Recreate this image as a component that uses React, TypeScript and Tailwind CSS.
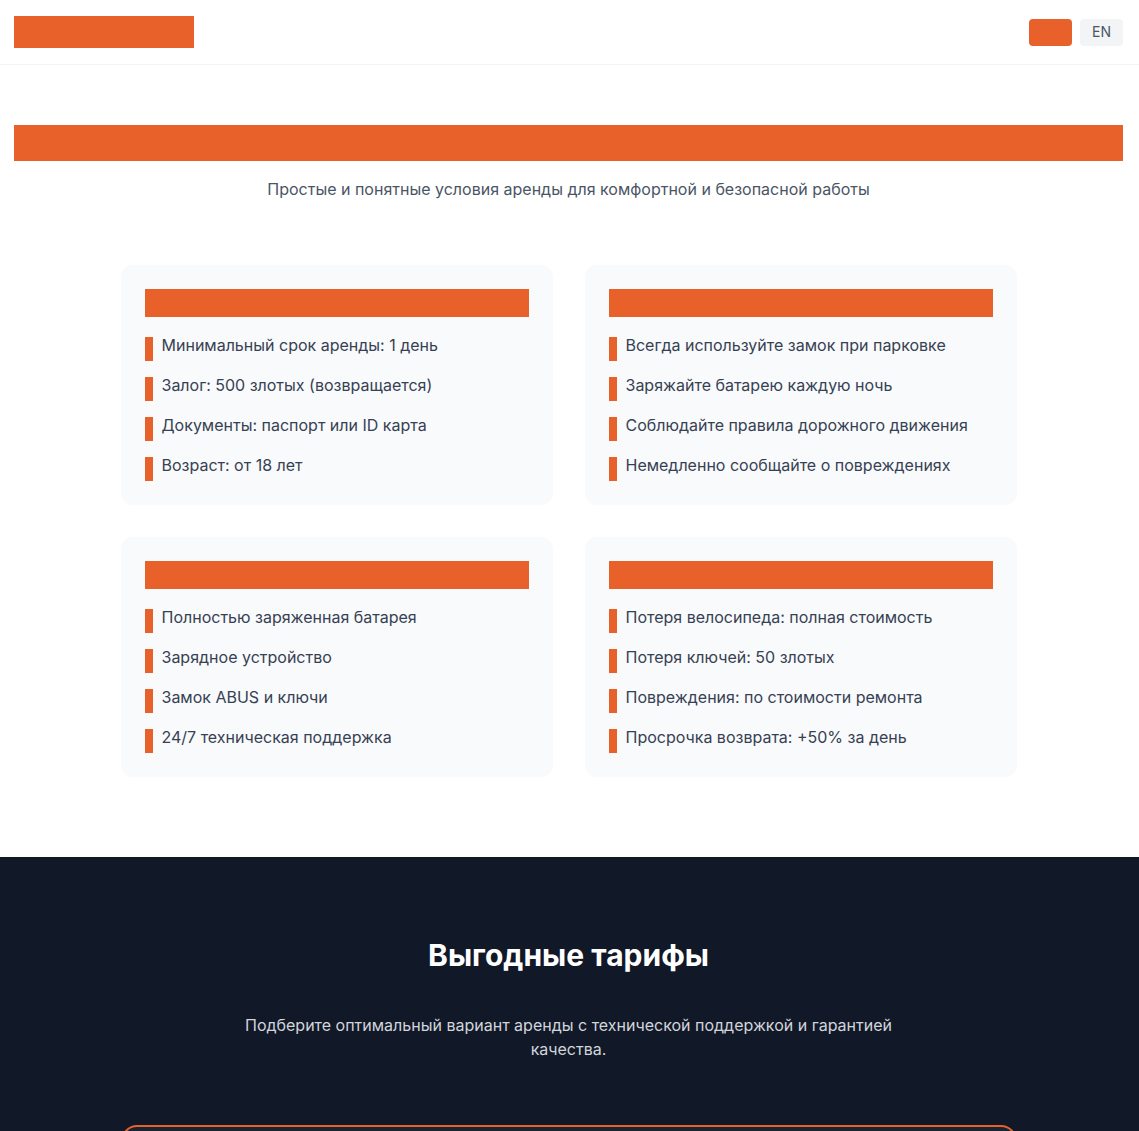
const ORANGE = "bg-[#e8612a]"

const conditions = [
  [
    "Минимальный срок аренды: 1 день",
    "Залог: 500 злотых (возвращается)",
    "Документы: паспорт или ID карта",
    "Возраст: от 18 лет",
  ],
  [
    "Всегда используйте замок при парковке",
    "Заряжайте батарею каждую ночь",
    "Соблюдайте правила дорожного движения",
    "Немедленно сообщайте о повреждениях",
  ],
  [
    "Полностью заряженная батарея",
    "Зарядное устройство",
    "Замок ABUS и ключи",
    "24/7 техническая поддержка",
  ],
  [
    "Потеря велосипеда: полная стоимость",
    "Потеря ключей: 50 злотых",
    "Повреждения: по стоимости ремонта",
    "Просрочка возврата: +50% за день",
  ],
]

function Header() {
  return (
    <header className="bg-white border-b border-gray-100 h-[65px]">
      <div className="flex items-center justify-between h-16 pl-[14px] pr-4">
        {/* Logo placeholder */}
        <div className={`${ORANGE} w-[180px] h-8`} />
        <div className="flex items-center gap-2">
          <button className={`${ORANGE} w-[43px] h-[27px] rounded`} />
          <button className="bg-gray-100 text-gray-600 text-sm w-[43px] h-[27px] rounded">EN</button>
        </div>
      </div>
    </header>
  )
}

function ConditionCard({ items }: { items: string[] }) {
  return (
    <div className="bg-gray-50 rounded-xl p-6">
      <div className={`${ORANGE} h-7 mb-4`} />
      <ul className="flex flex-col gap-3">
        {items.map((t) => (
          <li key={t} className="flex items-start text-base leading-6 text-gray-700">
            <span className={`${ORANGE} w-2 h-6 mt-1 mr-[9px] shrink-0`} />
            <span>{t}</span>
          </li>
        ))}
      </ul>
    </div>
  )
}

export default function App() {
  return (
    <div className="min-h-screen bg-white" style={{ fontFamily: "Inter, 'Noto Sans', sans-serif" }}>
      <Header />

      {/* Rental conditions */}
      <section className="pt-[60px] pb-20 pl-[14px] pr-4">
        <div className={`${ORANGE} h-9`} />
        <p className="mt-4 text-center text-base leading-6 text-gray-600">
          Простые и понятные условия аренды для комфортной и безопасной работы
        </p>
        <div className="max-w-4xl mx-auto mt-16 grid grid-cols-2 gap-8">
          {conditions.map((items, i) => (
            <ConditionCard key={i} items={items} />
          ))}
        </div>
      </section>

      {/* Tariffs */}
      <section className="bg-[#111827] pt-20 pb-20 pl-4 pr-[18px]">
        <h2 className="text-center text-white font-bold text-3xl leading-9">Выгодные тарифы</h2>
        <p className="mt-10 max-w-2xl mx-auto text-center text-base leading-6 text-gray-300">
          Подберите оптимальный вариант аренды с технической поддержкой и гарантией качества.
        </p>
        <div className="max-w-4xl mx-auto mt-16 h-[320px] rounded-2xl border-2 border-[#e8612a] bg-[#1a2332]" />
      </section>
    </div>
  )
}
